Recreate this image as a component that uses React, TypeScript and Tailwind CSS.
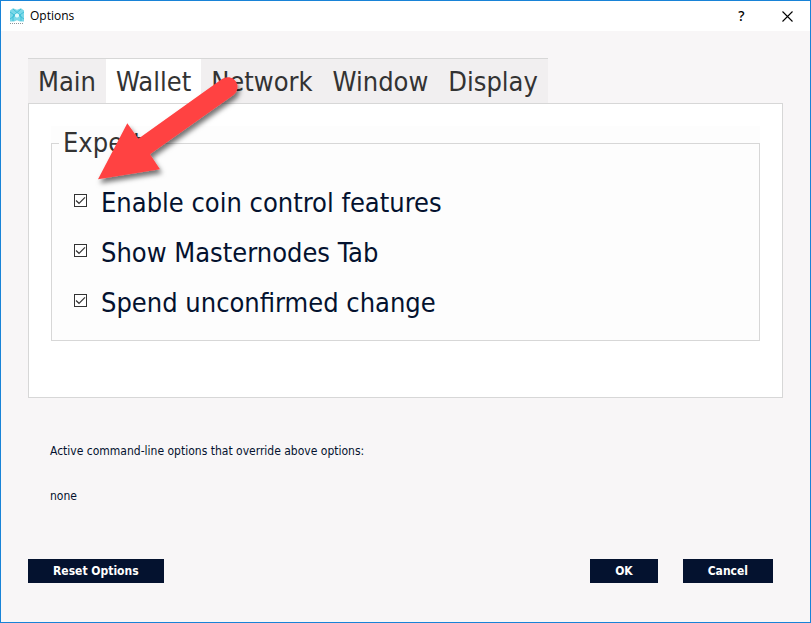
import { useState } from "react"

const tabs = ["Main", "Wallet", "Network", "Window", "Display"]

const walletOptions = [
  { id: "coin-control", label: "Enable coin control features" },
  { id: "masternodes", label: "Show Masternodes Tab" },
  { id: "unconfirmed", label: "Spend unconfirmed change" },
]

function AppIcon() {
  return (
    <svg width="16" height="17" viewBox="0 0 16 17" fill="none" aria-hidden="true">
      <path d="M1 2.500 4 0.300 8 1.800 12 0.300 15 2.500V13.500H11L8 12.300 5 13.500H1Z" fill="#7bd8e8" />
      <path
        d="M1 4l5 3.500L1 11M15 4l-5 3.500 5 3.500M4 1l8 7v5M12 1 4 8v5"
        stroke="#3fc0d8"
        strokeWidth="1"
      />
      <path d="M6 6.500l2-1.300 2 1.300v2L8 9.800 6 8.500Z" fill="#e2fafc" />
      <path d="M1 15.500h14" stroke="#8d9499" strokeDasharray="1 1" />
    </svg>
  )
}

function TitleBar() {
  return (
    <header className="flex h-[30px] shrink-0 items-center bg-white pl-2 text-black">
      <AppIcon />
      <h1 className="ml-[5px] flex-1 font-['Open_Sans','Noto_Sans',sans-serif] text-xs">Options</h1>
      <button
        type="button"
        aria-label="Help"
        className="h-full w-[45px] font-['Noto_Sans','Open_Sans',sans-serif] text-sm font-medium"
      >
        ?
      </button>
      <button type="button" aria-label="Close" className="flex h-full w-[46px] items-center justify-center">
        <svg width="11" height="11" viewBox="0 0 11 11" stroke="currentColor" strokeWidth="1.100">
          <path d="M0.500 0.500l10 10M10.500 0.500l-10 10" />
        </svg>
      </button>
    </header>
  )
}

function OptionCheckbox({ id, label }: { id: string; label: string }) {
  const [checked, setChecked] = useState(true)

  return (
    <div className="flex items-start gap-3.5">
      <span className="mt-2 grid size-[13px] place-items-center">
        <input
          id={id}
          type="checkbox"
          checked={checked}
          onChange={(e) => setChecked(e.target.checked)}
          className="col-start-1 row-start-1 size-[13px] appearance-none border border-[#333] bg-white"
        />
        {checked && (
          <svg
            className="pointer-events-none col-start-1 row-start-1"
            width="13"
            height="13"
            viewBox="0 0 13 13"
            fill="none"
            stroke="#333"
            strokeWidth="1.200"
          >
            <path d="M2 6.500 5 9.300l6-6" />
          </svg>
        )}
      </span>
      <label htmlFor={id} className="text-[27px] leading-[34px] text-[#04122f]">
        {label}
      </label>
    </div>
  )
}

function Arrow() {
  return (
    <svg
      className="pointer-events-none absolute top-[69px] left-[87px]"
      width="170"
      height="125"
      viewBox="88 70 170 125"
      aria-hidden="true"
    >
      <defs>
        <filter id="arrow-shadow" x="-20%" y="-20%" width="140%" height="140%">
          <feDropShadow dx="2" dy="4" stdDeviation="2.500" floodColor="#000" floodOpacity="0.550" />
        </filter>
      </defs>
      <path
        d="M98 179.300 127.300 123.300 138.300 138.700 222 79A9.700 9.700 0 0 1 233.500 95L150 154.300 160 169.300Z"
        fill="#ff4343"
        filter="url(#arrow-shadow)"
      />
    </svg>
  )
}

function DialogButton({ children }: { children: string }) {
  return (
    <button type="button" className="h-6 bg-[#04122f] px-[25px] text-xs leading-6 font-bold text-white">
      {children}
    </button>
  )
}

export default function App() {
  const [activeTab, setActiveTab] = useState("Wallet")

  return (
    <div className="relative flex min-h-screen flex-col border border-[#1883d7] bg-[#f8f6f7] font-['DejaVu_Sans_Condensed','DejaVu_Sans',sans-serif]">
      <TitleBar />

      <main className="flex flex-1 flex-col px-[27px] pt-[27px] pb-[39px]">
        <div role="tablist" className="flex self-start border-t border-[#d7d7d7]">
          {tabs.map((tab) => (
            <button
              key={tab}
              type="button"
              role="tab"
              aria-selected={tab === activeTab}
              onClick={() => setActiveTab(tab)}
              className={`h-11 px-2.5 pt-0.5 text-[27px] leading-[42px] text-[#333] ${
                tab === activeTab ? "bg-white" : "bg-[#f1eff0]"
              }`}
            >
              {tab}
            </button>
          ))}
        </div>

        <section className="border border-[#d7d7d7] bg-white px-[22px] pt-[22px] pb-14">
          <div className="bg-[#fdfdfd]">
            <fieldset className="border border-[#d7d7d7] px-[22px] pb-5">
              <legend className="-ml-[15px] px-1 text-[27px] leading-[34px] text-[#333]">
                Expert
              </legend>
              <div className="flex flex-col gap-4 pt-[26px]">
                {walletOptions.map((option) => (
                  <OptionCheckbox key={option.id} {...option} />
                ))}
              </div>
            </fieldset>
          </div>
        </section>

        <div className="mt-[45px] flex flex-col gap-[29px] px-[22px] text-xs text-[#04122f]">
          <p>Active command-line options that override above options:</p>
          <p>none</p>
        </div>

        <footer className="mt-auto flex items-center gap-[25px] pr-2.5">
          <DialogButton>Reset Options</DialogButton>
          <div className="flex-1" />
          <DialogButton>OK</DialogButton>
          <DialogButton>Cancel</DialogButton>
        </footer>
      </main>

      <Arrow />
    </div>
  )
}
